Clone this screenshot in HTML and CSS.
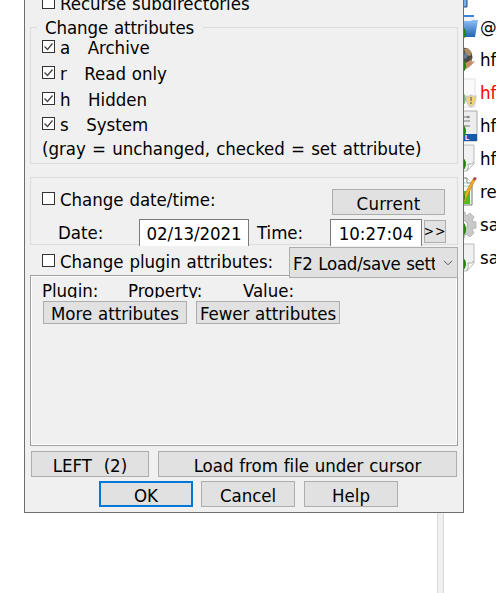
FILE: index.html
```
<!DOCTYPE html>
<html lang="en">
<head>
<meta charset="utf-8">
<title>Change attributes</title>
<link rel="stylesheet" href="styles.css">
</head>
<body>
<main class="desktop">
  <div class="splitter"></div>
  <ul class="files">
    <li><svg class="ico" viewBox="0 0 24 32"><path d="M0 0h13v28H0z" fill="#74aee8" stroke="#234c82"/></svg><span>w</span></li>
    <li><svg class="ico" viewBox="0 0 24 32"><defs><linearGradient id="blue" x2="0" y2="1"><stop stop-color="#8fc0f5"/><stop offset="1" stop-color="#2264b8"/></linearGradient></defs><path d="M0 3h20v8H0z" fill="#3e86dc"/><path d="M0 5h21v5H0z" fill="#f2f2f2"/><path d="M0 9h17l1-1h6l-3 17H0z" fill="url(#blue)"/><ellipse cx="8" cy="21" rx="4" ry="6" fill="#238307"/></svg><span>@</span></li>
    <li><svg class="ico" viewBox="0 0 24 32"><circle cx="9" cy="12" r="9.5" fill="#4b4a42"/><path d="M10 4l4-1 4 5-2 3-4-1z" fill="#ae8c64"/><path d="M11 7l3 3-2 4-3-1z" fill="#657b96"/><path d="M7 18q7 1 11-5l-1 4 4-1q-5 7-13 10z" fill="#c98b69"/><ellipse cx="8" cy="21" rx="4" ry="6" fill="#238307"/></svg><span>hf</span></li>
    <li class="hot"><svg class="ico" viewBox="0 0 24 32"><path d="M4 1h17v28H4z" fill="#fafafa" stroke="#e2e2e2"/><ellipse cx="8" cy="21" rx="4" ry="6" fill="#85b878"/><path d="M17 17q3 2 5 1 0 8-5 11-5-3-5-11 3 1 5-1z" fill="#f4d66e" stroke="#c9c9c9" stroke-width="1.2"/><path d="M17 19v4m0 1v2" stroke="#777" stroke-width="1.5"/></svg><span>hf</span></li>
    <li><svg class="ico" viewBox="0 0 24 32"><path d="M2 0h21v30H2z" fill="#ededed" stroke="#aaa"/><path d="M8 6h8M8 10h8M8 15h8" stroke="#777"/><circle cx="14" cy="6" r="1.3" fill="#888"/><path d="M2 23h21v7H2z" fill="#1658a8"/><ellipse cx="8" cy="20" rx="4" ry="6" fill="#238307"/><text class="tag" x="11" y="29">L</text></svg><span>hf</span></li>
    <li><svg class="ico" viewBox="0 0 24 32"><path d="M4 1h16v19l-7 7H4z" fill="#f1f1f1" stroke="#bbb"/><path d="M13 27q2-3 1-7 4 1 6-2" fill="#fff" stroke="#aaa"/><ellipse cx="8" cy="20" rx="4" ry="6" fill="#238307"/></svg><span>hf</span></li>
    <li><svg class="ico" viewBox="0 0 24 32"><path d="M2 1h11l5 6v21H2z" fill="#f6fff4" stroke="#777"/><path d="M13 1v5h5" fill="#fff" stroke="#888"/><path d="M7 6h6M7 9h9" stroke="#a9d0de"/><path d="M3 14h13v13H3z" fill="#50bd21"/><path d="M8 22L19 2l2 1-10 21-4 3z" fill="#f2ab21" stroke="#bd7719" stroke-width=".6"/><path d="M19 2l1-2 3 1-2 3z" fill="#ae4655"/><ellipse cx="7" cy="20" rx="4" ry="6" fill="#238307"/></svg><span>re</span></li>
    <li><svg class="ico" viewBox="0 0 24 32"><path d="M6 1l5 1 1 4 4-3 4 4-2 4 4 1v6l-4 1 2 4-4 4-4-3-2 4H6z" fill="#c9c9c9" stroke="#a9a9a9" stroke-width=".7"/><circle cx="9" cy="15" r="4.5" fill="#fff" stroke="#aaa"/><ellipse cx="8" cy="19" rx="4" ry="7" fill="#238307"/></svg><span>sa</span></li>
    <li><svg class="ico" viewBox="0 0 24 32"><path d="M4 1h16v19l-7 8H4z" fill="#f1f1f1" stroke="#bbb"/><path d="M13 28q2-4 1-8 4 1 6-2" fill="#fff" stroke="#aaa"/><ellipse cx="8" cy="21" rx="4" ry="6" fill="#238307"/></svg><span>sa</span></li>
  </ul>

  <section class="dialog">
    <div class="row indent"><i class="check"></i><span>Recurse subdirectories</span></div>

    <div class="group attrs">
      <div class="legend">Change attributes</div>
      <div class="row"><i class="check"><svg viewBox="0 0 11 11"><path d="M1.5 5.5l3 3 5-6"/></svg></i><span>a   Archive</span></div>
      <div class="row"><i class="check"><svg viewBox="0 0 11 11"><path d="M1.5 5.5l3 3 5-6"/></svg></i><span>r   Read only</span></div>
      <div class="row short"><i class="check"><svg viewBox="0 0 11 11"><path d="M1.5 5.5l3 3 5-6"/></svg></i><span>h   Hidden</span></div>
      <div class="row"><i class="check"><svg viewBox="0 0 11 11"><path d="M1.5 5.5l3 3 5-6"/></svg></i><span>s   System</span></div>
      <div class="row hint">(gray = unchanged, checked = set attribute)</div>
    </div>

    <div class="group dates">
      <div class="row top"><i class="check"></i><span>Change date/time:</span><div class="btn current">Current</div></div>
      <div class="row fields"><span class="date-label">Date:</span><div class="field date">02/13/2021</div><span class="time-label">Time:</span><div class="field time">10:27:04</div><div class="btn more">&gt;&gt;</div></div>
    </div>

    <div class="row plugin"><i class="check"></i><span>Change plugin attributes:</span>
      <div class="select"><span>F2 Load/save settings</span><svg viewBox="0 0 10 6"><path d="M1 .8l4 4 4-4"/></svg></div>
    </div>

    <div class="panel">
      <div class="heads"><span>Plugin:</span><span>Property:</span><span>Value:</span></div>
      <div class="pair"><div class="btn">More attributes</div><div class="btn">Fewer attributes</div></div>
    </div>

    <div class="wide"><div class="btn left">LEFT  (2)</div><div class="btn load">Load from file under cursor</div></div>
    <div class="actions"><div class="btn ok">OK</div><div class="btn">Cancel</div><div class="btn help">Help</div></div>
  </section>
</main>
</body>
</html>
```
FILE: styles.css
```
* { box-sizing: border-box; }
body {
  margin: 0;
  background: #fff;
  color: #000;
  font: 18.5px/27px "DejaVu Sans Condensed", "DejaVu Sans", sans-serif;
  font-stretch: condensed;
  letter-spacing: -.03px;
  word-spacing: .6px;
  white-space: nowrap;
}
.desktop {
  position: relative;
  width: 496px;
  height: 593px;
  overflow: hidden;
  display: flex;
}
.splitter {
  flex: none;
  width: 7px;
  margin-left: 437px;
  background: #f0f0f0;
  border: solid #d9d9d9;
  border-width: 0 1px;
}
.files {
  flex: none;
  list-style: none;
  margin: -22px 0 0 10px;
  padding: 0;
}
.files li { display: flex; height: 33px; align-items: center; }
.files span { margin: -3px 0 0 2px; }
.ico { width: 24px; height: 32px; overflow: visible; }
.hot { color: #f00; }
.tag { font: bold 7px "Liberation Sans", sans-serif; fill: #fff; }

.dialog {
  position: absolute;
  left: 24px;
  top: -11px;
  width: 440px;
  height: 524px;
  padding: 0 5px;
  border: 1px solid #6e6e6e;
  background: #f0f0f0;
}
.row { display: flex; height: 26px; white-space: pre; }
.check {
  flex: none;
  width: 13px;
  height: 13px;
  margin: 6px 5px 0 0;
  border: 1px solid #333;
  background: #fff;
}
.check svg { display: block; width: 11px; height: 11px; fill: none; stroke: #444; stroke-width: 1.3; }
.indent { padding-left: 12px; }
.group { width: 428px; border: 1px solid #dcdcdc; padding-left: 11px; }
.attrs { height: 137px; margin-top: 11px; }
.legend {
  width: 166px;
  height: 20px;
  margin: -11px 0 -3px -5px;
  padding-left: 8px;
  line-height: 22px;
  letter-spacing: -.1px;
  background: #f0f0f0;
}
.row.short { height: 25px; }
.row.hint { margin-top: -2px; word-spacing: 1px; letter-spacing: -.04px; }

.dates { height: 68px; margin-top: 13px; padding-top: 8px; }
.dates .top { height: 33px; }
.btn {
  flex: none;
  display: flex;
  justify-content: center;
  align-items: center;
  height: 26px;
  border: 1px solid #adadad;
  background: #e1e1e1;
  white-space: pre;
  padding-top: 3px;
}
.current { width: 113px; margin: 3px 12px 0 auto; letter-spacing: .2px; }
.fields { height: 27px; }
.date-label { width: 81px; padding-left: 16px; }
.field {
  height: 27px;
  border: 1px solid #7a7a7a;
  border-bottom: 0;
  background: #fff;
  text-align: center;
}
.date { width: 110px; margin-left: 16px; letter-spacing: -.1px; }
.time-label { width: 73px; margin-left: 8px; }
.time { width: 92px; }
.btn.more { width: 22px; height: 23px; margin: 1px 0 0 2px; font-size: 14px; letter-spacing: 1px; padding: 0; overflow: hidden; }

.plugin { height: 30px; padding-left: 12px; margin-top: 3px; }
.plugin > span { width: 229px; }
.select {
  display: flex;
  width: 169px;
  height: 31px;
  margin-top: -1px;
  padding: 2px 0 0 3px;
  border: 1px solid #adadad;
  background: #e1e1e1;
}
.select span { width: 142px; overflow: hidden; letter-spacing: -.25px; }
.select svg { width: 10px; height: 6px; margin: 10px 0 0 8px; fill: none; stroke: #555; }

.panel {
  width: 428px;
  height: 171px;
  margin-top: -3px;
  padding: 2px 0 0 11px;
  border: 1px solid #a0a0a5;
  box-shadow: inset -1px -1px #fff, inset 1px 1px #fff;
}
.heads { display: flex; height: 20px; overflow: hidden; line-height: 26px; }
.heads span { flex: none; width: 86px; }
.heads span:nth-child(2) { width: 115px; }
.pair { display: flex; gap: 9px; margin: 3px 0 0 1px; }
.pair .btn { width: 144px; height: 23px; padding-top: 1px; }
.wide { display: flex; gap: 9px; margin: 5px 0 0 1px; }
.left { width: 118px; }
.load { width: 299px; }
.actions { display: flex; gap: 8px; margin: 4px 0 0 69px; }
.actions .btn { width: 94px; padding-top: 2px; }
.actions .help { margin-left: 1px; }
.actions .ok { border: 2px solid #0078d7; }
```
